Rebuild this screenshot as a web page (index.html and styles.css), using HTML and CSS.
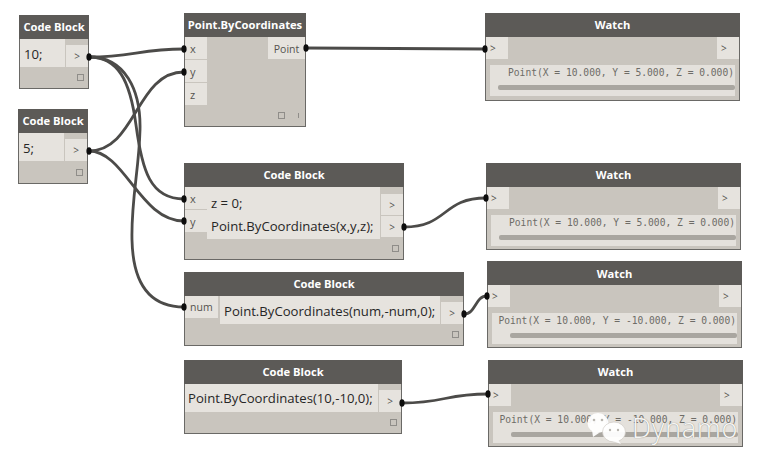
FILE: index.html
```html
<!DOCTYPE html>
<html lang="en">
<head>
<meta charset="utf-8">
<title>Dynamo graph</title>
<link rel="stylesheet" href="styles.css">
</head>
<body>
<main class="canvas">
  <section class="node n-a">
    <h2 class="head">Code Block</h2>
    <div class="body">
      <div class="code"><p>10;</p></div>
      <div class="outs"><span class="port out">&gt;</span></div>
    </div>
    <div class="foot"><i class="pin"></i></div>
  </section>
  <section class="node n-b">
    <h2 class="head">Code Block</h2>
    <div class="body">
      <div class="code"><p>5;</p></div>
      <div class="outs"><span class="port out">&gt;</span></div>
    </div>
    <div class="foot"><i class="pin"></i></div>
  </section>
  <section class="node n-c">
    <h2 class="head">Point.ByCoordinates</h2>
    <div class="body">
      <div class="ins"><span class="port in">x</span><span class="port in">y</span><span class="port in">z</span></div>
      <span class="port named">Point</span>
    </div>
    <div class="foot"><i class="pin"></i><i class="tick"></i></div>
  </section>
  <section class="node n-d">
    <h2 class="head">Code Block</h2>
    <div class="body">
      <div class="ins"><span class="port in">x</span><span class="port in">y</span></div>
      <div class="code"><p>z = 0;</p><p>Point.ByCoordinates(x,y,z);</p></div>
      <div class="outs"><span class="port out">&gt;</span><span class="port out">&gt;</span></div>
    </div>
    <div class="foot"><i class="pin"></i></div>
  </section>
  <section class="node n-e">
    <h2 class="head">Code Block</h2>
    <div class="body">
      <div class="ins"><span class="port in wide">num</span></div>
      <div class="code"><p>Point.ByCoordinates(num,-num,0);</p></div>
      <div class="outs"><span class="port out">&gt;</span></div>
    </div>
    <div class="foot"><i class="pin"></i></div>
  </section>
  <section class="node n-f">
    <h2 class="head">Code Block</h2>
    <div class="body">
      <div class="code"><p>Point.ByCoordinates(10,-10,0);</p></div>
      <div class="outs"><span class="port out">&gt;</span></div>
    </div>
    <div class="foot"><i class="pin"></i></div>
  </section>

  <section class="node watch w-a">
    <h2 class="head">Watch</h2>
    <div class="ports"><span class="port chev">&gt;</span><span class="port chev">&gt;</span></div>
    <div class="view"><p class="val">Point(X = 10.000, Y = 5.000, Z = 0.000)</p><div class="bar"></div></div>
  </section>
  <section class="node watch w-b">
    <h2 class="head">Watch</h2>
    <div class="ports"><span class="port chev">&gt;</span><span class="port chev">&gt;</span></div>
    <div class="view"><p class="val">Point(X = 10.000, Y = 5.000, Z = 0.000)</p><div class="bar"></div></div>
  </section>
  <section class="node watch w-c">
    <h2 class="head">Watch</h2>
    <div class="ports"><span class="port chev">&gt;</span><span class="port chev">&gt;</span></div>
    <div class="view"><p class="val">Point(X = 10.000, Y = -10.000, Z = 0.000)</p><div class="bar"></div></div>
  </section>
  <section class="node watch w-d">
    <h2 class="head">Watch</h2>
    <div class="ports"><span class="port chev">&gt;</span><span class="port chev">&gt;</span></div>
    <div class="view"><p class="val">Point(X = 10.000, Y = -10.000, Z = 0.000)</p><div class="bar"></div></div>
  </section>

  <svg class="wires" viewBox="0 0 757 461" width="757" height="461" aria-hidden="true">
    <g class="wire">
      <path d="M89 57C132 57 140 49 184 49"/>
      <path d="M89 57C118 57 130 80 136 125C142 170 150 199 184 199"/>
      <path d="M89 57C125 57 141 90 140 130C139 170 131 200 132 240C133 285 150 307 184 307"/>
      <path d="M89 151C136 151 136 72 184 72"/>
      <path d="M89 151C125 151 140 221 184 221"/>
      <path d="M306 48C380 48 410 49 485 49"/>
      <path d="M404 227C448 227 442 198 486 198"/>
      <path d="M464 314C476 314 475 296 487 296"/>
      <path d="M402 403C445 403 445 394 488 394"/>
    </g>
    <g class="ends">
      <ellipse cx="89" cy="57" rx="2.6" ry="3.8"/><ellipse cx="89" cy="151" rx="2.6" ry="3.8"/>
      <ellipse cx="184" cy="49" rx="2.6" ry="3.8"/><ellipse cx="184" cy="72" rx="2.6" ry="3.8"/>
      <ellipse cx="184" cy="199" rx="2.6" ry="3.8"/><ellipse cx="184" cy="221" rx="2.6" ry="3.8"/><ellipse cx="184" cy="307" rx="2.6" ry="3.8"/>
      <ellipse cx="306" cy="48" rx="2.6" ry="3.8"/><ellipse cx="404" cy="227" rx="2.6" ry="3.8"/>
      <ellipse cx="464" cy="314" rx="2.6" ry="3.8"/><ellipse cx="402" cy="403" rx="2.6" ry="3.8"/>
      <ellipse cx="485" cy="49" rx="2.6" ry="3.8"/><ellipse cx="486" cy="198" rx="2.6" ry="3.8"/>
      <ellipse cx="487" cy="296" rx="2.6" ry="3.8"/><ellipse cx="488" cy="394" rx="2.6" ry="3.8"/>
    </g>
  </svg>

  <div class="mark">
    <svg class="mark-icon" viewBox="0 0 40 32" width="40" height="32" aria-hidden="true">
      <ellipse class="bubble" cx="11" cy="11" rx="10.5" ry="10"/>
      <path class="bubble" d="M5 18l1 7 6-4z"/>
      <ellipse class="bubble front" cx="27" cy="20" rx="11.5" ry="10"/>
      <path class="bubble" d="M31 28l3 4-8-3z"/>
      <circle class="eye" cx="7" cy="8" r="1.3"/><circle class="eye" cx="15" cy="8" r="1.3"/>
      <circle class="eye" cx="23" cy="18" r="1.2"/><circle class="eye" cx="31" cy="18" r="1.2"/>
    </svg>
    <span class="mark-text">Dynamo</span>
  </div>
</main>
</body>
</html>
```

FILE: styles.css
```css
* { box-sizing: border-box; }
html, body { margin: 0; padding: 0; background: #fff; }
p, h2 { margin: 0; font: inherit; }

.canvas {
  position: relative;
  width: 757px;
  height: 461px;
  overflow: hidden;
  font-family: "Open Sans", "Noto Sans", sans-serif;
  color: #2f2f2f;
}

.node {
  position: absolute;
  display: flex;
  flex-direction: column;
  background: #c9c5be;
  border: 1px solid #6a6966;
  border-top: 0;
}

.n-a { left: 19px; top: 15px; width: 70px; height: 74px; }
.n-b { left: 18px; top: 109px; width: 70px; height: 75px; }
.n-c { left: 184px; top: 13px; width: 122px; height: 114px; }
.n-d { left: 184px; top: 163px; width: 220px; height: 97px; }
.n-e { left: 184px; top: 272px; width: 280px; height: 74px; }
.n-f { left: 184px; top: 360px; width: 218px; height: 74px; }
.w-a { left: 485px; top: 13px; width: 255px; height: 88px; }
.w-b { left: 486px; top: 163px; width: 255px; height: 87px; }
.w-c { left: 487px; top: 261px; width: 255px; height: 87px; }
.w-d { left: 488px; top: 360px; width: 255px; height: 87px; }

.head {
  flex: none;
  height: 24px;
  margin: 0 -1px;
  background: #5c5a57;
  color: #fff;
  font-size: 11.2px;
  font-weight: 700;
  line-height: 24px;
  text-align: center;
}
.w-c .head { line-height: 25px; }

.body { display: flex; align-items: flex-start; justify-content: space-between; }

.code {
  flex: 1;
  display: flex;
  flex-direction: column;
  justify-content: center;
  height: 28px;
  padding: 2px 0 0 4px;
  background: #e6e3de;
  color: #262626;
  font-size: 13.15px;
  line-height: 18px;
  white-space: nowrap;
}
.n-d .code { height: 52px; line-height: 23px; padding: 4px 0 0 4px; }
.n-e .code { margin-left: 2px; }
.n-f .code { padding: 0 0 0 3px; }

.outs {
  flex: none;
  display: flex;
  flex-direction: column;
  gap: 1px;
  width: 23px;
  padding-left: 1px;
  padding-top: 6px;
}
.n-d .outs { padding-top: 7px; }

.port {
  display: flex;
  align-items: center;
  background: #e6e3de;
  color: #55534f;
  font-size: 11px;
}
.out { height: 22px; justify-content: center; font-size: 10px; }
.n-d .out { height: 21px; }

.ins { flex: none; display: flex; flex-direction: column; gap: 1px; width: 22px; }
.n-e .ins { width: auto; }
.in { height: 22px; padding-left: 5px; }
.wide { width: 33px; height: 22px; font-size: 10.5px; }

.named {
  width: 37px;
  height: 22px;
  padding-top: 2px;
  justify-content: center;
  font-size: 10.5px;
}

.foot {
  flex: 1;
  display: flex;
  align-items: flex-end;
  justify-content: flex-end;
  gap: 12px;
  padding: 0 4px 7px 0;
}
.n-c .foot { padding-right: 6px; gap: 13px; }
.pin { width: 7px; height: 7px; border: 1px solid #8f8d89; }
.tick { width: 1px; height: 5px; margin-bottom: 1px; background: #8f8d89; }

.ports { display: flex; justify-content: space-between; flex: none; }
.chev { width: 22px; height: 22px; padding-left: 4px; font-size: 10px; }

.view {
  display: flex;
  flex-direction: column;
  height: 31px;
  margin: 6px 4px 0;
  padding-top: 1px;
  background: #e4e1dc;
}
.val {
  height: 19px;
  padding-right: 1px;
  color: #6e6c67;
  font-family: "DejaVu Sans Mono", "Liberation Mono", monospace;
  font-size: 9.65px;
  line-height: 14px;
  text-align: right;
  white-space: nowrap;
}
.bar { align-self: flex-end; height: 5px; background: #a9a6a0; border-radius: 2px; }
.w-a .bar, .w-b .bar { width: 237px; }
.w-c .bar, .w-d .bar { width: 227px; }

.wires { position: absolute; left: 0; top: 0; pointer-events: none; }
.wire path { fill: none; stroke: #4c4b49; stroke-width: 2.8; }
.ends ellipse { fill: #0d0d0d; }

.mark {
  position: absolute;
  left: 587px;
  top: 412px;
  display: flex;
  align-items: center;
  gap: 5px;
  pointer-events: none;
}
.mark-icon { flex: none; }
.bubble { fill: #fff; fill-opacity: .94; }
.front { stroke: #c9c5be; stroke-width: .6; }
.eye { fill: #b9b6b0; }
.mark-text {
  color: #f6f5f3;
  font-family: "Noto Sans", sans-serif;
  font-size: 27px;
  font-weight: 300;
  letter-spacing: .6px;
  line-height: 30px;
  text-shadow: 0 0 1px #77756f;
}
```
